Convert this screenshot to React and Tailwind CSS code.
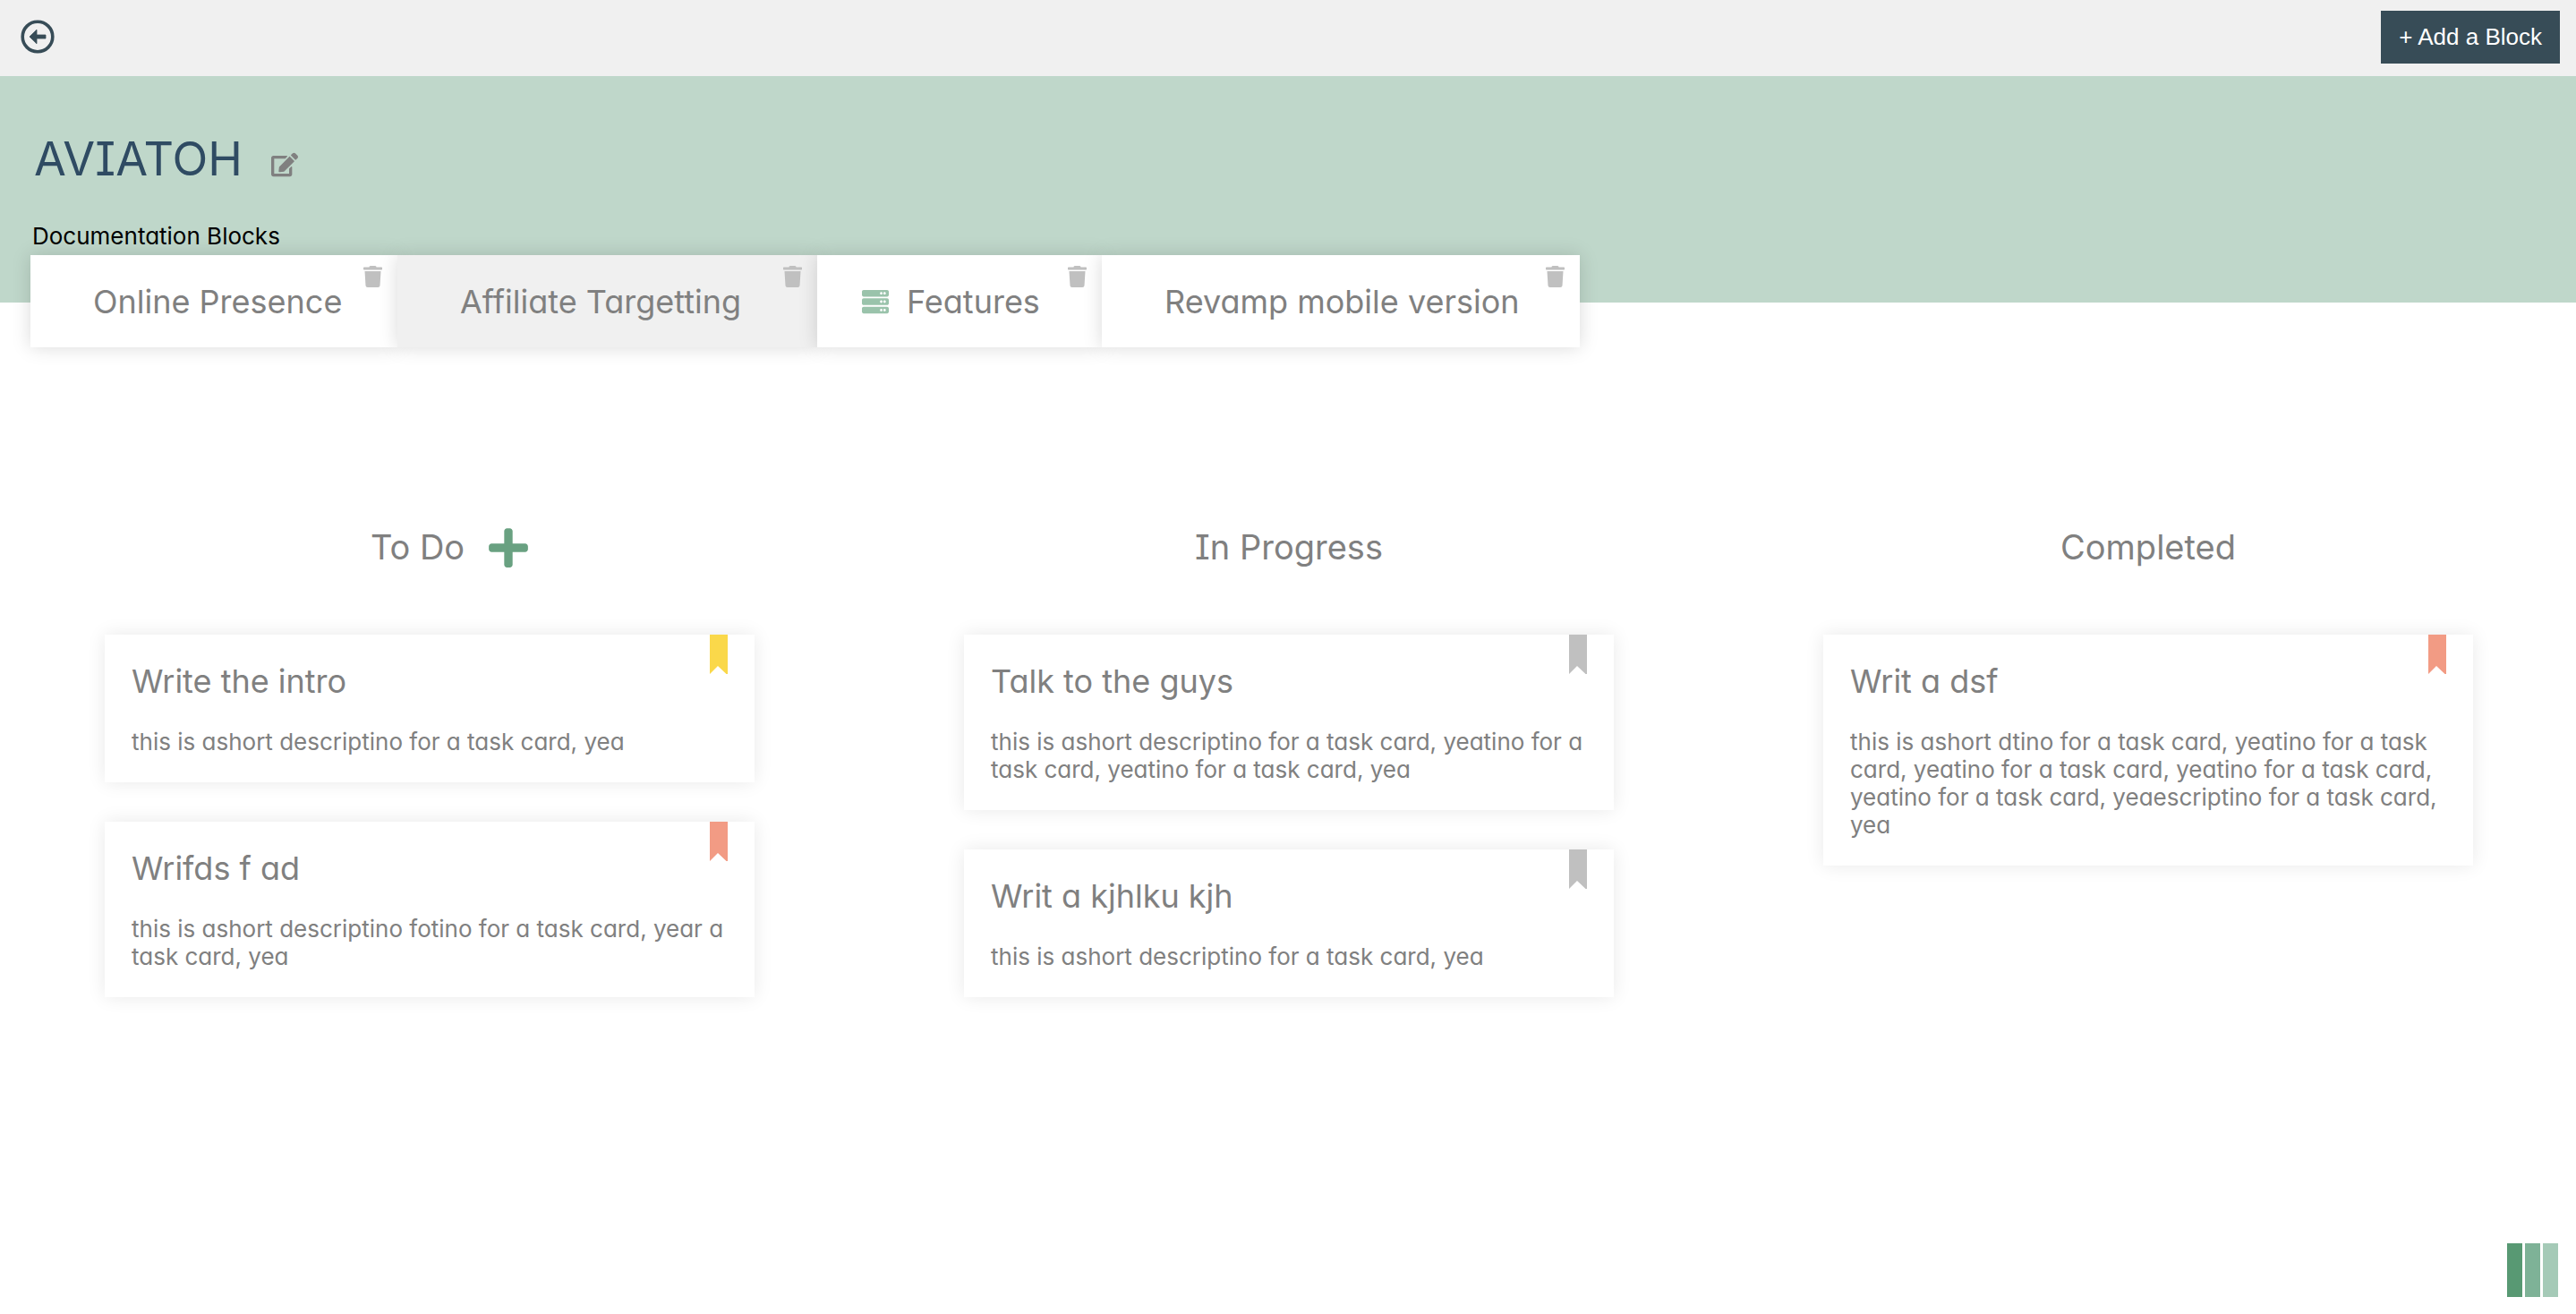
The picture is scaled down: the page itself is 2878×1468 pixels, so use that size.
import React from "react";
import { FaEdit, FaPlus, FaServer, FaTrash } from "react-icons/fa";

const blocks = [
  { name: "Online Presence", box: "w-[410px] bg-white pl-[70px]" },
  { name: "Affiliate Targetting", box: "w-[469px] bg-[#f0f0f0] pl-[70px]" },
  { name: "Features", box: "w-[318px] bg-white pl-[50px]", icon: true },
  { name: "Revamp mobile version", box: "w-[534px] bg-white pl-[70px]" },
];

const columns = [
  {
    title: "To Do",
    canAdd: true,
    tasks: [
      { title: "Write the intro", text: "this is ashort descriptino for a task card, yea", flag: "text-[#fad84a]" },
      { title: "Wrifds f ad", text: "this is ashort descriptino fotino for a task card, year a task card, yea", flag: "text-[#f29b84]" },
    ],
  },
  {
    title: "In Progress",
    tasks: [
      { title: "Talk to the guys", text: "this is ashort descriptino for a task card, yeatino for a task card, yeatino for a task card, yea", flag: "text-[#c0c0c0]" },
      { title: "Writ a kjhlku kjh", text: "this is ashort descriptino for a task card, yea", flag: "text-[#c0c0c0]" },
    ],
  },
  {
    title: "Completed",
    tasks: [
      {
        title: "Writ a dsf",
        text:
          "this is ashort dtino for a task card, yeatino for a task " +
          "card, yeatino for a task card, yeatino for a task card, " +
          "yeatino for a task card, yeaescriptino for a task card, yea",
        flag: "text-[#f29b84]",
      },
    ],
  },
];

function BackIcon() {
  return (
    <svg viewBox="0 0 38 38" className="size-[38px]" aria-hidden="true">
      <circle cx="19" cy="19" r="16.8" fill="none" stroke="currentColor" strokeWidth="3.6" />
      <path
        d="M10 19 18 11.2V17H28V21H18V26.8Z"
        fill="currentColor"
        stroke="currentColor"
        strokeWidth="0.8"
        strokeLinejoin="round"
      />
    </svg>
  );
}

function Ribbon({ className }) {
  return (
    <svg viewBox="0 0 20 44" className={`absolute top-0 right-[30px] h-11 w-5 ${className}`} aria-hidden="true">
      <path d="M0 0H20V44H18.5L9 35 0 44Z" fill="currentColor" />
    </svg>
  );
}

function TaskCard({ task }) {
  return (
    <article className="relative bg-white pt-[30px] pr-7 pb-[30px] pl-[30px] shadow-[0_0_20px_rgba(0,0,0,0.09)]">
      <Ribbon className={task.flag} />
      <h3 className="text-[36px] leading-[44px]">{task.title}</h3>
      <p className="mt-[30px] text-[26px] leading-[31px]">{task.text}</p>
    </article>
  );
}

export default function App() {
  return (
    <div className="min-h-screen bg-white font-['Inter',sans-serif] text-[#808080] [font-feature-settings:'cv08','cv11']">
      <header className="flex h-[85px] items-start justify-between bg-[#f0f0f0] pt-3 pr-[18px] pl-[23px]">
        <button type="button" aria-label="Back" className="pt-[10px] text-[#374c57]">
          <BackIcon />
        </button>
        <button type="button" className="h-[59px] bg-[#374c57] px-5 font-['Liberation_Sans',sans-serif] text-[26px] text-white">
          + Add a Block
        </button>
      </header>

      <section className="h-[253px] bg-[#bfd7ca] pt-[63px]">
        <div className="flex items-center gap-[32px] pl-[38px]">
          <h1 className="text-[52px] leading-[60px] text-[#2f4b63]">AVIATOH</h1>
          <button type="button" aria-label="Edit title" className="pt-3">
            <FaEdit className="size-[30px]" />
          </button>
        </div>
        <p className="mt-[40px] pl-[36px] text-[26px] leading-[32px] text-black">Documentation Blocks</p>
        <div className="mt-[5px] flex px-[34px]">
          {blocks.map((b) => (
            <div
              key={b.name}
              className={`relative flex h-[103px] items-center gap-[20px] shadow-[0_0_20px_rgba(0,0,0,0.15)] ${b.box}`}
            >
              {b.icon && <FaServer className="size-[30px] text-[#9ac3ab]" aria-hidden="true" />}
              <button type="button" className="text-[36px] whitespace-nowrap">{b.name}</button>
              <button type="button" aria-label={`Delete ${b.name}`} className="absolute top-3 right-[17px] text-[#c0c0c0]">
                <FaTrash className="h-6 w-[21px]" />
              </button>
            </div>
          ))}
        </div>
      </section>

      <main className="grid grid-cols-3 gap-x-[234px] pt-[244px] pr-[115px] pl-[117px]">
        {columns.map((c) => (
          <section key={c.title}>
            <div className={`flex h-[60px] items-center justify-center gap-[27px] ${c.canAdd ? "pl-[44px]" : ""}`}>
              <h2 className="pb-[2px] text-[38px]">{c.title}</h2>
              {c.canAdd && (
                <button type="button" aria-label="Add task" className="text-[#69a181]">
                  <FaPlus className="h-[50px] w-11" />
                </button>
              )}
            </div>
            <div className="mt-[67px] flex flex-col gap-11">
              {c.tasks.map((t) => (
                <TaskCard key={t.title} task={t} />
              ))}
            </div>
          </section>
        ))}
      </main>

      <svg viewBox="0 0 57 60" className="fixed right-5 bottom-[19px] h-[60px] w-[57px]" aria-hidden="true">
        <rect width="17" height="60" fill="#589973" />
        <rect x="20" width="17" height="60" fill="#7eb297" />
        <rect x="40" width="17" height="60" fill="#a5cab7" />
      </svg>
    </div>
  );
}
